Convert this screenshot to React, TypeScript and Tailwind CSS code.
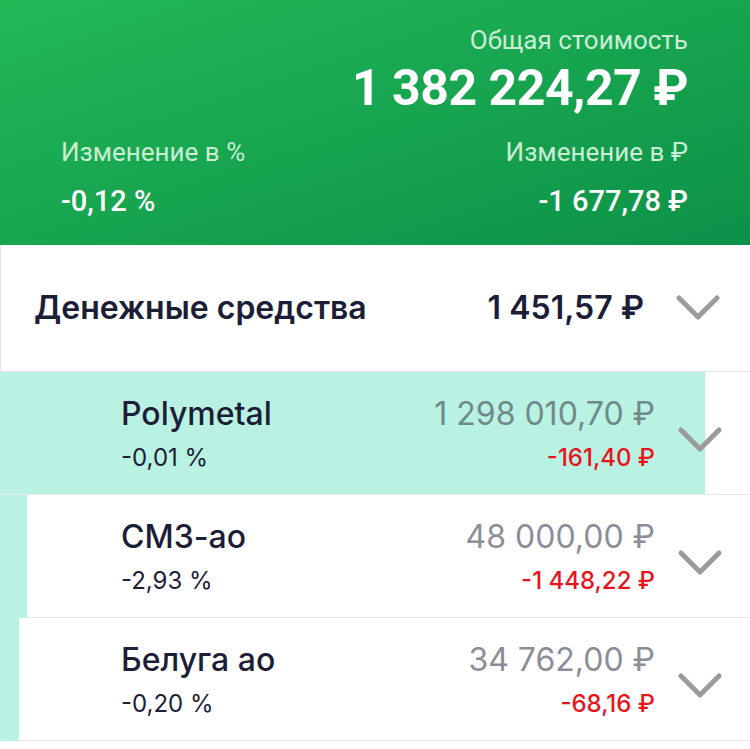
import React from "react";

type Position = {
  name: string;
  pct: string;
  value: string;
  change: string;
  offset: string;
  pad: string;
  bg: string;
  valueColor: string;
};

const positions: Position[] = [
  {
    name: "Polymetal",
    pct: "-0,01 %",
    value: "1 298 010,70 ₽",
    change: "-161,40 ₽",
    offset: "ml-0",
    pad: "pl-[121px]",
    bg: "bg-[linear-gradient(to_right,#b9f1e2_705px,#ffffff_705px)]",
    valueColor: "text-[#6f8a8a]",
  },
  {
    name: "СМЗ-ао",
    pct: "-2,93 %",
    value: "48 000,00 ₽",
    change: "-1 448,22 ₽",
    offset: "ml-[27px]",
    pad: "pl-[94px]",
    bg: "bg-white",
    valueColor: "text-[#8d8d99]",
  },
  {
    name: "Белуга ао",
    pct: "-0,20 %",
    value: "34 762,00 ₽",
    change: "-68,16 ₽",
    offset: "ml-[19px]",
    pad: "pl-[102px]",
    bg: "bg-white",
    valueColor: "text-[#8d8d99]",
  },
];

function Chevron() {
  return (
    <svg width="44" height="26" viewBox="0 0 44 26" className="shrink-0">
      <polyline
        points="3,3 22,22 41,3"
        fill="none"
        stroke="#9b9b9b"
        strokeWidth="5"
        strokeLinecap="round"
        strokeLinejoin="round"
      />
    </svg>
  );
}

export default function App() {
  return (
    <div className="min-h-[749px] w-[750px] bg-white font-['Roboto',sans-serif] antialiased">
      <header className="h-[245px] bg-linear-to-br from-[#22b957] to-[#0b9148] pl-[61px] pr-[62px] pt-[24px] text-white">
        <div className="flex flex-col items-end">
          <p className="text-[26px] leading-[32px] text-[#c9eed4]">Общая стоимость</p>
          <p className="mt-[4px] text-[50px] font-bold leading-[56px] tracking-[-0.5px]">
            1 382 224,27 ₽
          </p>
        </div>
        <div className="mt-[20px] flex justify-between">
          <div>
            <p className="text-[26px] leading-[32px] text-[#c9eed4]">Изменение в %</p>
            <p className="mt-[15px] text-[29px] font-medium leading-[36px]">-0,12 %</p>
          </div>
          <div className="text-right">
            <p className="text-[26px] leading-[32px] text-[#c9eed4]">Изменение в ₽</p>
            <p className="mt-[15px] text-[29px] font-medium leading-[36px]">-1 677,78 ₽</p>
          </div>
        </div>
      </header>

      <div className="flex h-[127px] items-center border-b border-l border-[#e6e6e6] pl-[33px] pr-[30px] font-['Inter',sans-serif] text-[#1b1e36]">
        <span className="flex-1 text-[32px] font-semibold">Денежные средства</span>
        <span className="text-[32px] font-semibold">1 451,57 ₽</span>
        <span className="ml-[32px]">
          <Chevron />
        </span>
      </div>

      <div className="bg-[#b9f1e2] font-['Inter',sans-serif]">
        {positions.map((p) => (
          <div
            key={p.name}
            className={`${p.offset} ${p.bg} flex h-[123px] items-center border-b border-[#e8e8e8] pr-[28px]`}
          >
            <div className={`flex flex-1 items-start justify-between ${p.pad}`}>
              <div className="text-[#1b1e36]">
                <p className="text-[32px] font-medium leading-[40px]">{p.name}</p>
                <p className="mt-[9px] text-[24px] leading-[30px]">{p.pct}</p>
              </div>
              <div className="text-right">
                <p className={`text-[32px] leading-[40px] ${p.valueColor}`}>{p.value}</p>
                <p className="mt-[9px] text-[24px] font-medium leading-[30px] text-[#e8141c]">
                  {p.change}
                </p>
              </div>
            </div>
            <span className="ml-[23px] mt-[14px]">
              <Chevron />
            </span>
          </div>
        ))}
      </div>
    </div>
  );
}
